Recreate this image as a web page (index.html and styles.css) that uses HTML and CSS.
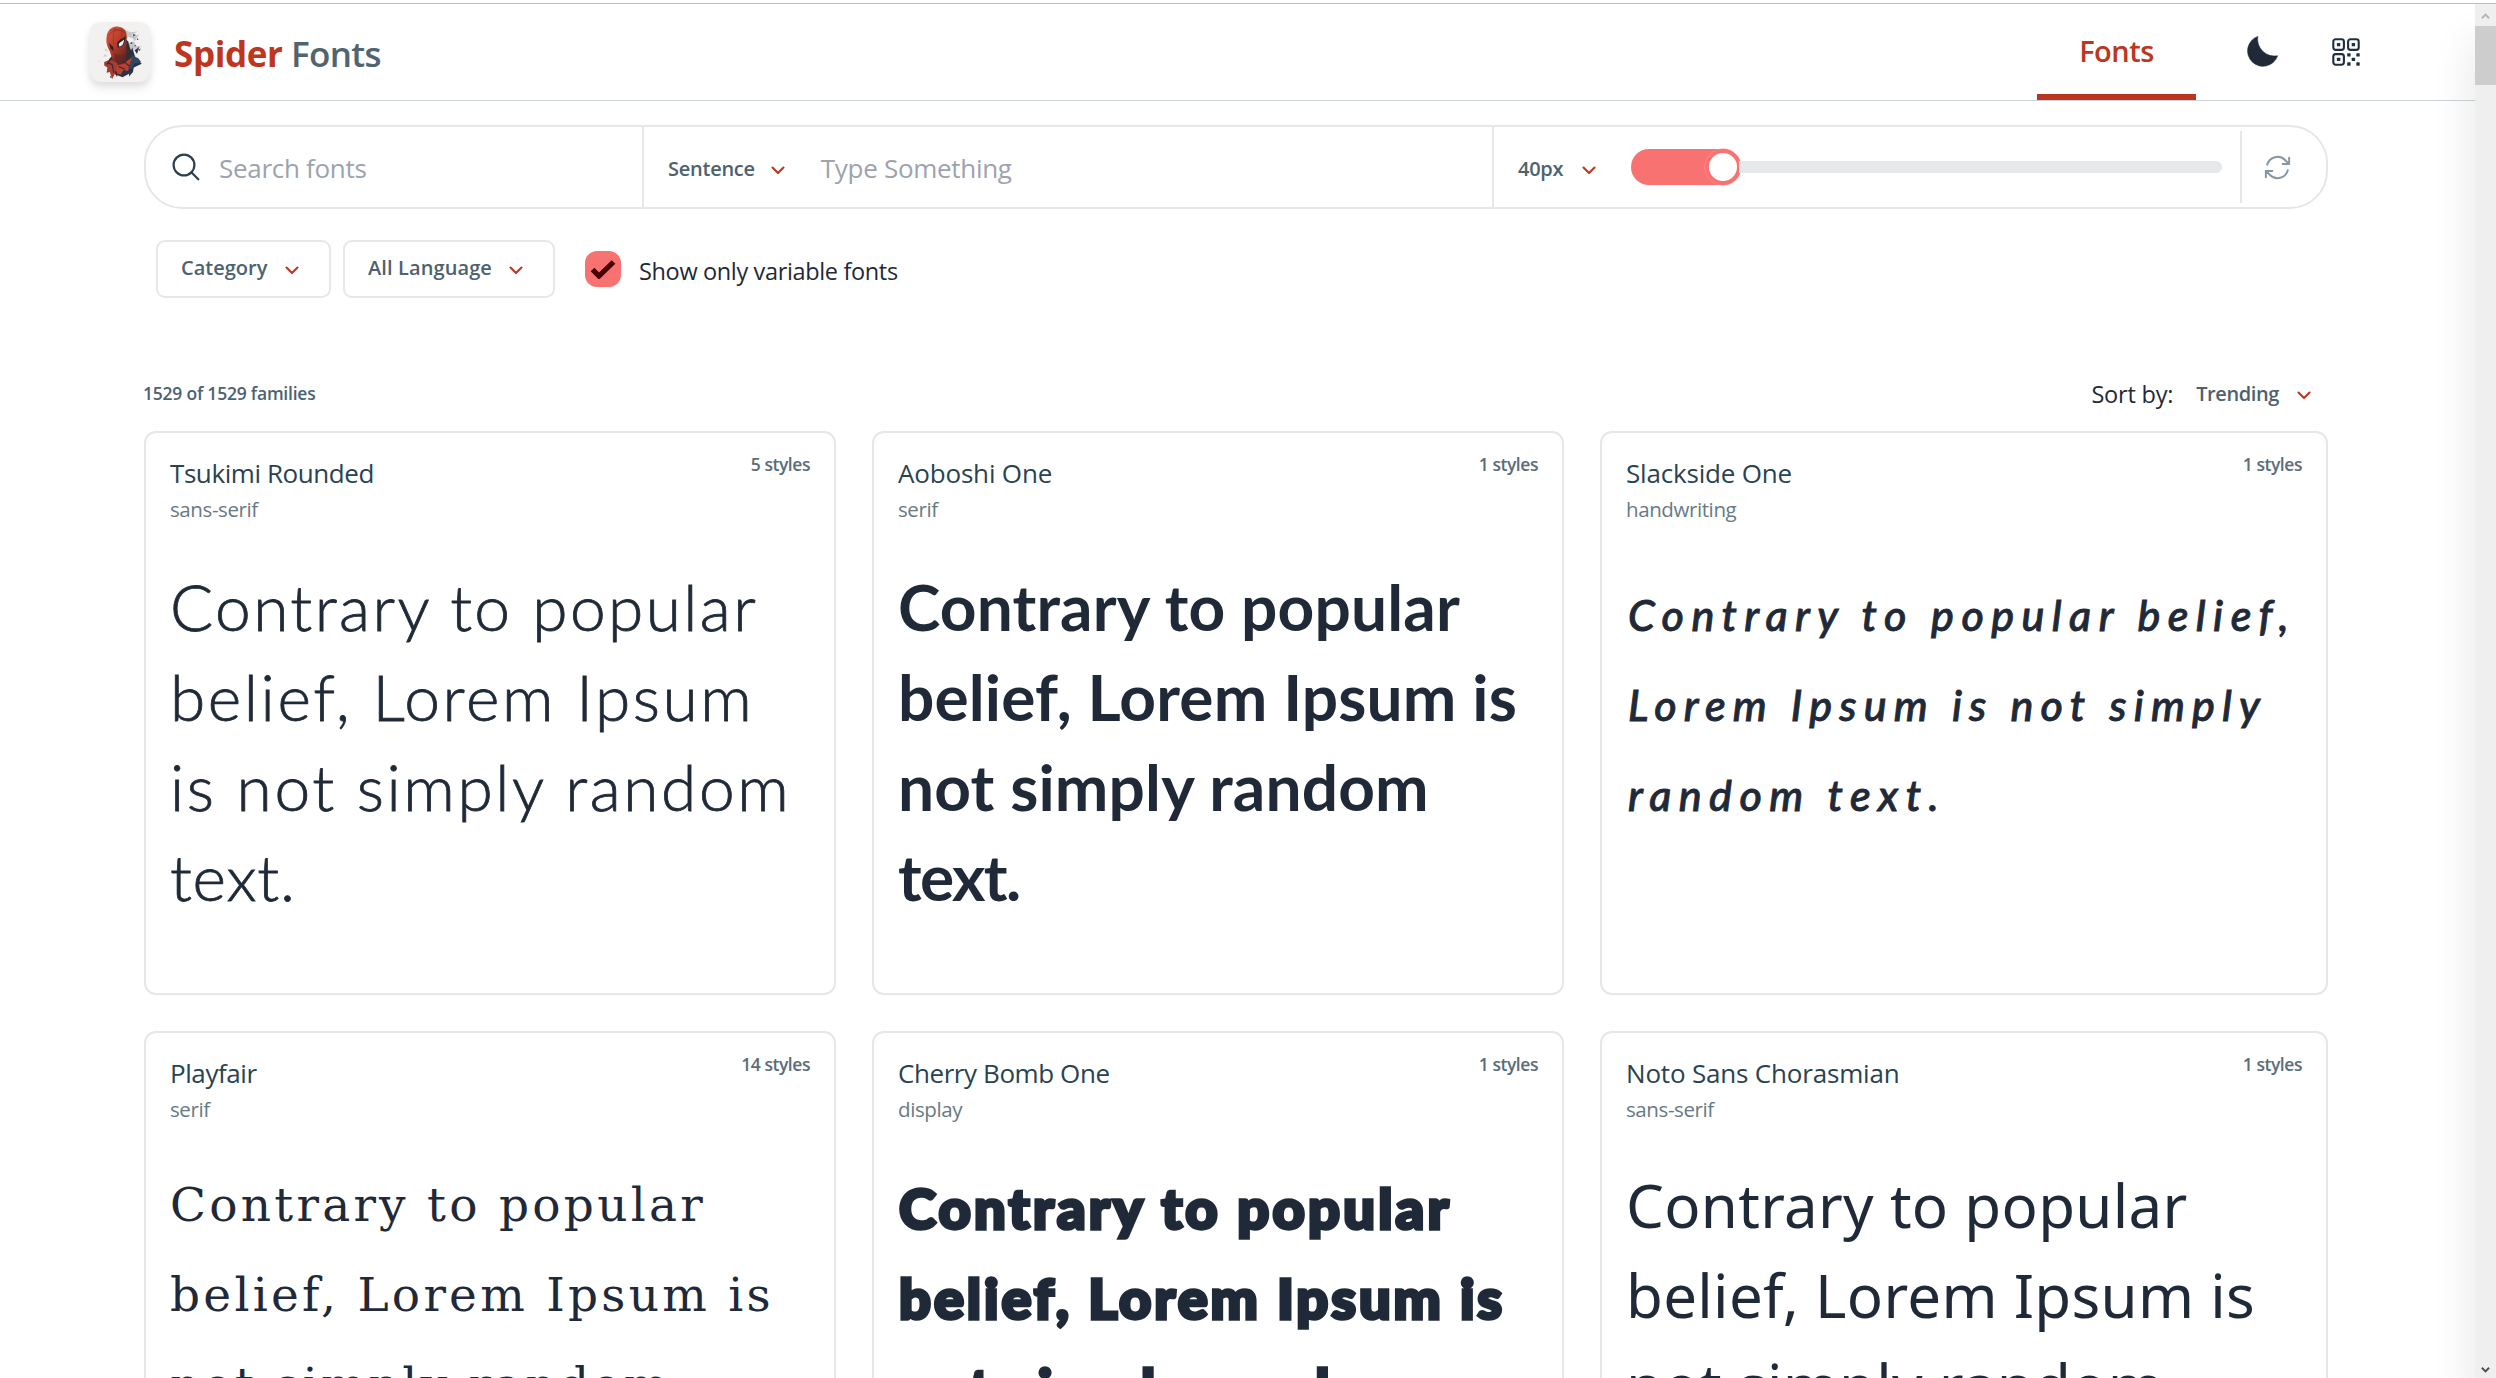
FILE: index.html
```html
<!DOCTYPE html>
<html lang="en">
<head>
<meta charset="utf-8">
<title>Spider Fonts</title>
<link rel="stylesheet" href="styles.css">
</head>
<body>
<svg class="defs" width="0" height="0">
  <symbol id="chevron" viewBox="0 0 14 9"><path d="M1.500 1.500 7 7l5.500-5.500" fill="none" stroke="currentColor" stroke-width="2.100" stroke-linecap="round" stroke-linejoin="round"/></symbol>
</svg>
<div class="shell">
  <div class="page">
    <header class="topbar">
      <a class="brand">
        <span class="logo">
          <svg viewBox="0 0 72 72" width="72" height="72">
            <defs>
              <filter id="soft"><feGaussianBlur stdDeviation=".45"/></filter>
              <linearGradient id="mask" x1="0" y1="0" x2=".6" y2="1"><stop offset="0" stop-color="#dc5a41"/><stop offset=".55" stop-color="#b53a29"/><stop offset="1" stop-color="#5d2422"/></linearGradient>
            </defs>
            <g filter="url(#soft)" transform="matrix(.8 0 0 .9 5 1)">
              <path d="M44 14l8 3 9-1-8 4 6 5-10-3-4 6zM54 23l9-4-6 8zM48 30l8-3 3 5 7 1-8 2-5 5z" fill="#c3c7cb"/>
              <path d="M19 35l5 2-3 1zM17 44l4-3 1 3zM22 26l2 1-2 2zM12 48l2 1-2 1z" fill="#cdcac8"/>
              <path d="M25 47l6-6 8 8 10-3 5-12 4 11 8 7-10 4-6 7-8 4-9-3-8-6z" fill="#2c3345"/>
              <path d="M44 24l5 3 2 7 3 6-3 9-8 4-6-4z" fill="#322e38"/>
              <path d="M22 22c1-8 8-13 16-11 8 1 10 7 9 14 0 4-1 8 0 13l-1 10-8 7-8-6-4-11c-3-5-5-9-4-16z" fill="url(#mask)"/>
              <path d="M25 20c5-6 14-6 20-4M27 15c6-2 12-1 18 3M33 12c-3 6-3 12-2 19M40 12c2 7 1 11-2 17" fill="none" stroke="#8c3024" stroke-width=".7"/>
              <path d="M35 29c2-3 6-5 11-8-1 8-3 12-10 13z" fill="#2a2226"/>
              <path d="M37 30c2-2 4-3 7-5-1 5-2 7-6 8z" fill="#e9eef0"/>
              <path d="M25 29l5 4 1 5-4-3z" fill="#2a2226"/>
              <path d="M32 40c4 3 8 3 13 1l-2 9-6 4-5-6z" fill="#612a2a" opacity=".7"/>
              <path d="M19 50l8-3 8 4 3 8-5 3-4 7-3-8-4 1 1-6-4-2z" fill="#a83a31"/>
              <path d="M34 54l9-2 12-8 5 3-9 6-2 7-6-1-3 5-5-1z" fill="#bc4030"/>
              <path d="M24 51l5 2 2 9M37 55l8 3M27 47l-5 6M43 49l8 6M33 60l2 6" stroke="#3a2530" stroke-width="1.300" fill="none"/>
              <path d="M53 42l9 4 3 4-9 2-3 6-4-2 4-8z" fill="#2f4864"/>
              <path d="M50 61l6-6-1 6-5 5zM57 37l6-4-3 8z" fill="#29344a"/>
              <path d="M52 28h2v2h-2zM57 31h1.500v1.500H57zM60 24h1.500v1.500H60zM27 65l2 3-3-1zM55 19l4 1-4 2zM62 36l3-1-2 3z" fill="#4d5058"/>
            </g>
          </svg>
        </span>
        <span class="brand-name"><b>Spider</b> Fonts</span>
      </a>
      <nav class="nav">
        <a class="nav-link">Fonts</a>
        <svg class="moon" viewBox="0 0 32 32" width="32" height="32"><path d="M11.800.4A15.400 15.400 0 1 0 31.600 19.800 17 17 0 0 1 11.800.4z" fill="#1f2937" stroke="#1f2937" stroke-width=".6" stroke-linejoin="round"/></svg>
        <svg class="qr" viewBox="0 0 28 28" width="28" height="28">
          <g fill="none" stroke="#1f2f3f" stroke-width="2.100"><rect x="1.300" y="1.300" width="10.600" height="10.600" rx="2.400"/><rect x="16.100" y="1.300" width="10.600" height="10.600" rx="2.400"/><rect x="1.300" y="16.100" width="10.600" height="10.600" rx="2.400"/></g>
          <g fill="#1f2f3f"><rect x="4.900" y="4.900" width="3.400" height="3.400" rx=".6"/><rect x="19.700" y="4.900" width="3.400" height="3.400" rx=".6"/><rect x="4.900" y="19.700" width="3.400" height="3.400" rx=".6"/><rect x="15.200" y="15.200" width="3.400" height="3.400" rx=".6"/><rect x="24.300" y="15.200" width="3.400" height="3.400" rx=".6"/><rect x="19.700" y="19.700" width="3.400" height="3.400" rx=".6"/><rect x="15.200" y="24.300" width="3.400" height="3.400" rx=".6"/><rect x="24.300" y="24.300" width="3.400" height="3.400" rx=".6"/></g>
        </svg>
      </nav>
    </header>

    <main class="content">
      <section class="toolbar">
        <div class="seg seg-search">
          <svg viewBox="0 0 28 28" width="28" height="28"><g fill="none" stroke="#2a4052" stroke-width="2.200" stroke-linecap="round"><circle cx="12" cy="12" r="10.400"/><path d="M19.500 19.500l6.800 6.800"/></g></svg>
          <span class="placeholder">Search fonts</span>
        </div>
        <div class="seg seg-text">
          <span class="select">Sentence</span><svg class="chev" width="14" height="9"><use href="#chevron"/></svg>
          <span class="placeholder">Type Something</span>
        </div>
        <div class="seg seg-size">
          <span class="select">40px</span><svg class="chev" width="14" height="9"><use href="#chevron"/></svg>
          <div class="range"><div class="range-fill"><span class="thumb"></span></div><div class="range-track"></div></div>
          <span class="rule"></span>
        </div>
        <div class="seg seg-reset">
          <svg viewBox="0 0 24 24" width="31" height="31"><path d="M16.023 9.348h4.992V4.356M2.985 19.644v-4.992h4.992m-4.993 0 3.181 3.183a8.250 8.250 0 0 0 13.803-3.700M4.031 9.865a8.250 8.250 0 0 1 13.803-3.700l3.181 3.182" fill="none" stroke="#8896a1" stroke-width="1.500" stroke-linecap="round" stroke-linejoin="round"/></svg>
        </div>
      </section>

      <section class="filters">
        <button class="btn btn-category">Category<svg class="chev" width="14" height="9"><use href="#chevron"/></svg></button>
        <button class="btn btn-language">All Language<svg class="chev" width="14" height="9"><use href="#chevron"/></svg></button>
        <span class="checkbox"><svg viewBox="0 0 26 20" width="26" height="20"><path d="M2.500 10.500l6.500 6.500L23.500 3" fill="none" stroke="#470000" stroke-width="5.200"/></svg></span>
        <span class="check-label">Show only variable fonts</span>
      </section>

      <section class="summary">
        <span class="count">1529 of 1529 families</span>
        <span class="sort"><span class="sort-label">Sort by:</span><span class="sort-value">Trending</span><svg class="chev" width="14" height="9"><use href="#chevron"/></svg></span>
      </section>

      <section class="grid">
        <article class="card">
          <div class="card-head"><div><h2>Tsukimi Rounded</h2><p>sans-serif</p></div><span class="styles">5 styles</span></div>
          <div class="sample tsukimi"><span>Contrary to popular</span><span>belief, Lorem Ipsum</span><span>is not simply random</span><span class="tail">text.</span></div>
        </article>
        <article class="card">
          <div class="card-head"><div><h2 class="loose">Aoboshi One</h2><p>serif</p></div><span class="styles">1 styles</span></div>
          <div class="sample aoboshi"><span>Contrary to popular</span><span>belief, Lorem Ipsum is</span><span>not simply random</span><span class="tail">text.</span></div>
        </article>
        <article class="card">
          <div class="card-head"><div><h2 class="loose">Slackside One</h2><p>handwriting</p></div><span class="styles">1 styles</span></div>
          <div class="sample slackside"><span>Contrary to popular belief,</span><span>Lorem Ipsum is not simply</span><span>random text.</span></div>
        </article>
        <article class="card">
          <div class="card-head"><div><h2>Playfair</h2><p>serif</p></div><span class="styles">14 styles</span></div>
          <div class="sample playfair"><span>Contrary to popular</span><span>belief, Lorem Ipsum is</span><span>not simply random</span></div>
        </article>
        <article class="card">
          <div class="card-head"><div><h2>Cherry Bomb One</h2><p>display</p></div><span class="styles">1 styles</span></div>
          <div class="sample cherry"><span>Contrary to popular</span><span>belief, Lorem Ipsum is</span><span>not simply random</span></div>
        </article>
        <article class="card">
          <div class="card-head"><div><h2 class="loose">Noto Sans Chorasmian</h2><p>sans-serif</p></div><span class="styles">1 styles</span></div>
          <div class="sample noto"><span>Contrary to popular</span><span>belief, Lorem Ipsum is</span><span>not simply random</span></div>
        </article>
      </section>
    </main>
  </div>
  <aside class="scrollbar">
    <svg viewBox="0 0 10 8" width="9" height="8"><path d="M1 6.500l4-4 4 4" fill="none" stroke="#b5b5b5" stroke-width="2.200"/></svg>
    <span class="scroll-thumb"></span>
    <svg class="down" viewBox="0 0 10 8" width="9" height="8"><path d="M1 1.500l4 4 4-4" fill="none" stroke="#505050" stroke-width="2.200"/></svg>
  </aside>
</div>
</body>
</html>
```
FILE: styles.css
```css
* { box-sizing: border-box; }
html, body { margin: 0; height: 100%; overflow: hidden; background: #fff; }
body { font-family: "Open Sans", "Noto Sans", sans-serif; color: #1f2937; }
.defs { display: block; height: 0; }
h2, p { margin: 0; font-weight: 400; }
svg { flex: none; display: block; }

.shell { display: flex; height: 1378px; padding-top: 3px; overflow: hidden; }
.page { flex: 1; min-width: 0; overflow: hidden; border-top: 1px solid #b3bfc9; }

.topbar { display: flex; justify-content: space-between; height: 97px; padding: 0 115px 0 90px; border-bottom: 1px solid #cbd5da; }
.brand { display: flex; align-items: center; gap: 24px; }
.logo { display: flex; align-items: center; justify-content: center; width: 60px; height: 60px; border-radius: 10px; overflow: hidden; background: #f2f1f0; box-shadow: 0 6px 10px rgba(0, 0, 0, .1), 0 2px 6px rgba(0, 0, 0, .05); }
.brand-name { padding-top: 3px; font-size: 35px; font-weight: 600; line-height: 48px; letter-spacing: -.6px; color: #50656f; white-space: nowrap; }
.brand-name b { font-weight: 700; letter-spacing: -.4px; color: #bc3620; }
.nav { display: flex; align-items: center; }
.nav-link { display: flex; align-items: center; justify-content: center; width: 159px; height: 96px; border-bottom: 6px solid #ba3520; padding-top: 2px; font-size: 29px; font-weight: 600; letter-spacing: -.5px; color: #bc3620; }
.moon { margin-left: 50px; margin-right: 1px; }
.qr { margin-left: 53px; }

.content { padding: 24px 147px 0 144px; }
.toolbar { display: flex; height: 84px; border: 2px solid #e5e7eb; border-radius: 38px; }
.seg { display: flex; align-items: center; }
.seg-search { width: 498px; padding-left: 26px; border-right: 2px solid #e5e7eb; }
.seg-search .placeholder { margin-left: 19px; }
.seg-text { width: 850px; padding-left: 24px; border-right: 2px solid #e5e7eb; }
.seg-text .placeholder { margin-left: 36px; }
.seg-size { width: 748px; padding-left: 24px; }
.seg-size .chev { margin-left: 19px; }
.seg-reset { flex: 1; padding-left: 20px; }
.placeholder { padding-top: 2px; font-size: 26px; line-height: 36px; letter-spacing: -.3px; color: #9ca3af; white-space: nowrap; }
.select { padding-top: 3px; font-size: 20px; font-weight: 600; line-height: 30px; letter-spacing: -.25px; color: #4d626f; }
.chev { margin: 8px 0 0 16px; color: #bc3620; }
.toolbar .chev { margin-top: 7px; }
.range { display: flex; align-items: center; width: 591px; margin-left: 35px; }
.range-fill { display: flex; align-items: center; justify-content: flex-end; width: 110px; height: 36px; border-radius: 18px; background: #f87272; }
.thumb { width: 36px; height: 36px; border: 4px solid #f87272; border-radius: 50%; background: #fff; box-shadow: 0 0 0 .5px #fa9a9a; }
.range-track { flex: 1; height: 12px; margin-left: -2px; border-radius: 0 6px 6px 0; background: #e7e8ea; }
.rule { width: 2px; height: 72px; margin-left: auto; background: #e5e7eb; }

.filters { display: flex; align-items: center; height: 58px; margin-top: 31px; padding-left: 12px; }
.btn { display: flex; align-items: center; height: 58px; padding: 0 0 3px 23px; border: 2px solid #e5e7eb; border-radius: 9px; background: #fff; font-family: inherit; font-size: 20px; font-weight: 600; line-height: 30px; color: #4d626f; white-space: nowrap; }
.btn-category { width: 175px; }
.btn-language { width: 212px; margin-left: 12px; letter-spacing: .1px; }
.btn .chev { margin-top: 5px; margin-left: 18px; }
.btn-language .chev { margin-left: 17px; }
.checkbox { display: flex; align-items: center; justify-content: center; width: 36px; height: 36px; margin-left: 30px; border-radius: 12px; background: #f87272; }
.check-label { padding-top: 3px; margin-left: 18px; font-size: 23.5px; line-height: 34px; letter-spacing: -.35px; }

.summary { display: flex; align-items: center; justify-content: space-between; height: 60px; margin: 66px 0 7px; }
.count { font-size: 17.5px; font-weight: 600; line-height: 26px; letter-spacing: -.22px; color: #4d626f; padding-bottom: 2px; margin-left: -1px; }
.sort { display: flex; align-items: center; padding-right: 17px; }
.sort-label { font-size: 23.5px; line-height: 34px; letter-spacing: -.2px; margin-right: 23px; }
.sort-value { font-size: 20px; font-weight: 600; line-height: 30px; letter-spacing: -.4px; color: #4d626f; }
.sort .chev { margin-top: 3px; margin-left: 18px; }

.grid { display: grid; grid-template-columns: 692px 692px 728px; grid-auto-rows: 564px; gap: 36px; }
.card { border: 2px solid #e5e7eb; border-radius: 12px; padding: 22px 24px 0; overflow: hidden; }
.card-head { display: flex; align-items: flex-start; justify-content: space-between; height: 69px; }
.card h2 { font-size: 26px; line-height: 36px; letter-spacing: -.42px; color: #294352; }
.card h2.loose { letter-spacing: -.18px; }
.card p { margin-top: 3px; font-size: 20.5px; line-height: 30px; letter-spacing: -.4px; color: #667a86; }
.styles { margin-top: -4px; font-size: 17.5px; font-weight: 600; line-height: 26px; letter-spacing: -.45px; color: #5a6d78; }

.sample { margin-top: 36px; line-height: 90px; white-space: nowrap; color: #1f2937; }
.sample span { display: block; height: 90px; }
.tsukimi { margin-top: 38px; font-family: Lato, sans-serif; font-size: 64px; font-weight: 300; letter-spacing: 2.6px; -webkit-text-stroke: .8px #1f2937; }
.tsukimi span:first-child { letter-spacing: 2.4px; }
.tsukimi .tail { letter-spacing: .8px; }
.aoboshi { margin-top: 38px; font-family: Lato, sans-serif; font-size: 64px; font-weight: 700; letter-spacing: .15px; }
.aoboshi .tail { letter-spacing: -1.6px; }
.slackside { margin-top: 46px; padding-left: 2px; font-family: Lato, sans-serif; font-size: 43px; font-style: italic; font-weight: 500; letter-spacing: 7.45px; -webkit-text-stroke: .9px #1f2937; }
.slackside span:nth-child(2) { letter-spacing: 7.15px; }
.playfair { font-family: "DejaVu Serif", serif; font-size: 47px; letter-spacing: 3.25px; }
.cherry { margin-top: 39px; padding-left: 1px; font-family: Lato, sans-serif; font-size: 56px; font-weight: 900; letter-spacing: 3.2px; -webkit-text-stroke: 3.5px #1f2937; stroke-linejoin: round; }
.cherry span:nth-child(2) { letter-spacing: 2.9px; }
.noto { margin-top: 36px; font-family: "Noto Sans", sans-serif; font-size: 60px; letter-spacing: .3px; }

.scrollbar { display: flex; flex-direction: column; align-items: center; width: 21px; padding-top: 8px; border-top: 1px solid #b3bfc9; background: #efefef; box-shadow: 0 36px 42px rgba(0, 0, 0, .14); z-index: 1; }
.scroll-thumb { width: 21px; height: 59px; margin-top: 6px; background: #cdcdcd; }
.down { margin-top: auto; margin-bottom: 4px; }
```
